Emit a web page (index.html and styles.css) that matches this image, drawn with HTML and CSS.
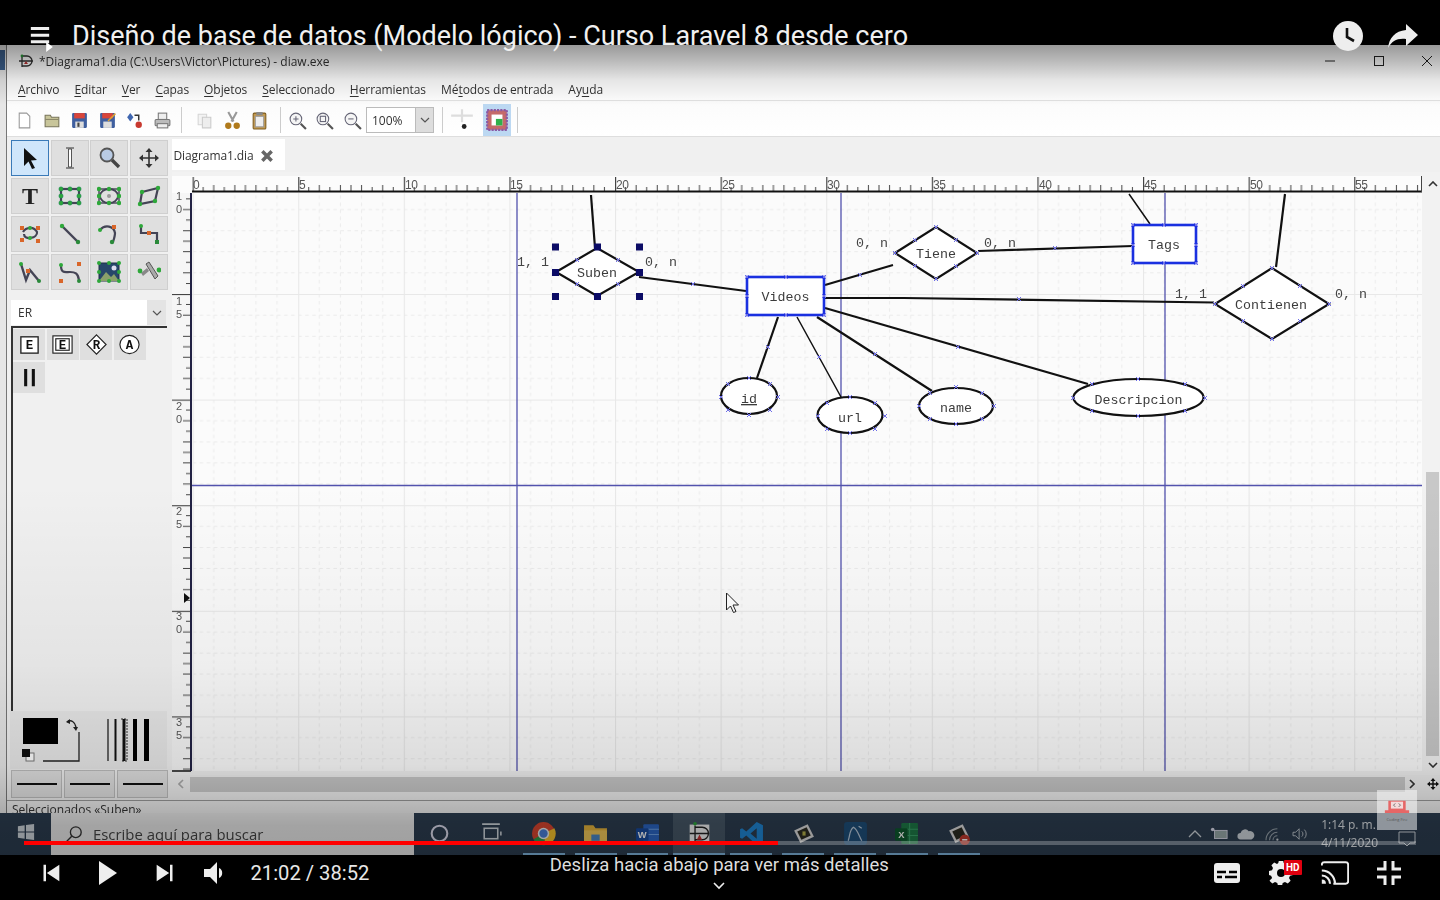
FILE: index.html
```html
<!DOCTYPE html>
<html lang="es">
<head>
<meta charset="utf-8">
<title>Diseño de base de datos</title>
<link rel="stylesheet" href="styles.css">
</head>
<body>
<div class="player">
  <div class="topbar"></div>
  <div class="video">
    <div class="desk">
      <div class="strip"><span class="strip-blue"></span></div>
      <div class="win">
        <div class="titlebar">
          <svg class="ti" viewBox="0 0 16 16"><path d="M1 8h14M4 3h5a5 5 0 0 1 0 10H4zM4 2v12" fill="none" stroke="#333" stroke-width="1.3"/><circle cx="4" cy="3" r="1.4" fill="#2a9a3a"/><path d="M6 11l2-3 2 3z" fill="#b33"/></svg>
          <span class="ti-text">*Diagrama1.dia (C:\Users\Victor\Pictures) - diaw.exe</span>
          <div class="winbtns">
            <svg class="wb" viewBox="0 0 12 12"><path d="M1 6h10" stroke="#222" stroke-width="1"/></svg>
            <svg class="wb" viewBox="0 0 12 12"><rect x="1.5" y="1.5" width="9" height="9" fill="none" stroke="#222" stroke-width="1"/></svg>
            <svg class="wb" viewBox="0 0 12 12"><path d="M1 1l10 10M11 1L1 11" stroke="#222" stroke-width="1"/></svg>
          </div>
        </div>
        <div class="menubar">
          <span><u>A</u>rchivo</span><span><u>E</u>ditar</span><span><u>V</u>er</span><span><u>C</u>apas</span><span><u>O</u>bjetos</span><span><u>S</u>eleccionado</span><span><u>H</u>erramientas</span><span>Mé<u>t</u>odos de entrada</span><span>Ay<u>u</u>da</span>
        </div>
        <div class="toolbar">
          <span class="tb"><svg viewBox="0 0 18 18"><path d="M4 2h7l3 3v11H4z" fill="#fff" stroke="#999"/></svg></span>
          <span class="tb"><svg viewBox="0 0 18 18"><path d="M2 4h5l1 2h7v9H2z" fill="#c8c59a" stroke="#77745a"/><path d="M2 8h13" stroke="#8a8768"/></svg></span>
          <span class="tb"><svg viewBox="0 0 18 18"><rect x="2" y="2" width="14" height="14" rx="1" fill="#3f5f9f"/><rect x="4" y="2" width="10" height="5" fill="#d9453a"/><rect x="5" y="10" width="8" height="6" fill="#ddd"/><rect x="7" y="11" width="2" height="4" fill="#444"/></svg></span>
          <span class="tb"><svg viewBox="0 0 18 18"><rect x="2" y="2" width="14" height="14" rx="1" fill="#3f5f9f"/><rect x="4" y="2" width="10" height="5" fill="#d9453a"/><rect x="5" y="10" width="8" height="6" fill="#ddd"/><path d="M9 9l7-7 1 1-7 7z" fill="#e0a030"/></svg></span>
          <span class="tb"><svg viewBox="0 0 18 18"><path d="M5 2l3 4-3 4-3-4z" fill="#3f66b0"/><path d="M9 4h4v5" fill="none" stroke="#333" stroke-width="1.4"/><circle cx="13" cy="13" r="3" fill="#c8392f"/></svg></span>
          <span class="tb"><svg viewBox="0 0 18 18"><rect x="5" y="2" width="8" height="6" fill="#eee" stroke="#777"/><rect x="2" y="8" width="14" height="6" rx="1" fill="#bbb" stroke="#777"/><rect x="4" y="12" width="10" height="4" fill="#eee" stroke="#777"/></svg></span>
          <i class="sep first"></i>
          <span class="tb tb-a"><svg viewBox="0 0 18 18"><path d="M3 3h8v10H3z" fill="#eee" stroke="#bbb"/><path d="M7 6h8v10H7z" fill="#e4e4e4" stroke="#aaa"/></svg></span>
          <span class="tb"><svg viewBox="0 0 18 18"><path d="M5 1l5 9M13 1L8 10" stroke="#999" stroke-width="2"/><circle cx="5" cy="14" r="3" fill="#b07a1c"/><circle cx="13" cy="14" r="3" fill="#b07a1c"/></svg></span>
          <span class="tb"><svg viewBox="0 0 18 18"><rect x="3" y="2" width="12" height="15" rx="1" fill="#c79a4a" stroke="#7d5c20"/><rect x="5" y="5" width="8" height="10" fill="#eee" stroke="#999"/><rect x="6" y="1" width="6" height="3" fill="#888"/></svg></span>
          <i class="sep second"></i>
          <span class="tb"><svg viewBox="0 0 18 18"><circle cx="7.5" cy="7.5" r="5.5" fill="#f5f5f5" stroke="#667"/><path d="M12 12l5 5" stroke="#555" stroke-width="2"/><path d="M5 7.5h5M7.5 5v5" stroke="#667"/></svg></span>
          <span class="tb"><svg viewBox="0 0 18 18"><circle cx="7.5" cy="7.5" r="5.5" fill="#f5f5f5" stroke="#667"/><path d="M12 12l5 5" stroke="#555" stroke-width="2"/><rect x="5" y="5" width="5" height="5" fill="none" stroke="#667"/></svg></span>
          <span class="tb"><svg viewBox="0 0 18 18"><circle cx="7.5" cy="7.5" r="5.5" fill="#f5f5f5" stroke="#667"/><path d="M12 12l5 5" stroke="#555" stroke-width="2"/><path d="M5 7.5h5" stroke="#667"/></svg></span>
          <span class="combo"><span class="combo-v">100%</span><span class="combo-b"><svg viewBox="0 0 10 6" class="chev"><path d="M1 1l4 4 4-4" fill="none" stroke="#555" stroke-width="1.2"/></svg></span></span>
          <i class="sep third"></i>
          <span class="tb snap"><svg viewBox="0 0 24 24"><path d="M12 2v12M2 8h20" stroke="#ddd" stroke-width="2"/><circle cx="14" cy="18" r="2.2" fill="#222"/></svg></span>
          <span class="tb active"><svg viewBox="0 0 22 22"><rect x="2" y="2" width="18" height="18" fill="#c56a6a" stroke="#8a5aa5" stroke-width="2" stroke-dasharray="2 1"/><rect x="6" y="6" width="10" height="10" fill="#fff"/><rect x="10" y="10" width="6" height="6" fill="#2fb04a"/></svg></span>
          <i class="sep last"></i>
        </div>
        <div class="main">
          <aside class="dock">
            <div class="tools">
              <span class="tool sel"><svg viewBox="0 0 24 24"><path d="M6 2l13 12-6 .5 4 7.5-3 1-3.5-7.5L6 20z" fill="#111"/></svg></span>
              <span class="tool"><svg viewBox="0 0 24 24"><path d="M8 2h8M8 22h8" stroke="#333" stroke-width="1"/><path d="M10.5 3h3v18h-3z" fill="#fff" stroke="#444" stroke-width=".9"/></svg></span>
              <span class="tool"><svg viewBox="0 0 24 24"><circle cx="10" cy="9" r="6.5" fill="#b9cbe4" stroke="#555" stroke-width="1.8"/><path d="M15 14l7 7" stroke="#444" stroke-width="3.4"/></svg></span>
              <span class="tool"><svg viewBox="0 0 24 24"><path d="M12 5v14M5 12h14" stroke="#333" stroke-width="1.6"/><path d="M12 2l3.500 4h-7zM12 22l3.500-4h-7zM2 12l4-3.500v7zM22 12l-4-3.500v7z" fill="#333"/></svg></span>
              <span class="tool"><svg viewBox="0 0 24 24"><text x="12" y="20" class="t-t">T</text></svg></span>
              <span class="tool"><svg viewBox="0 0 24 24"><rect x="3" y="5" width="18" height="14" fill="none" stroke="#445" stroke-width="2.200"/><g fill="#2ea83a" stroke="#176"  stroke-width=".4"><circle cx="3" cy="5" r="2.200"/><circle cx="12" cy="5" r="2.200"/><circle cx="21" cy="5" r="2.200"/><circle cx="3" cy="12" r="2.200"/><circle cx="21" cy="12" r="2.200"/><circle cx="3" cy="19" r="2.200"/><circle cx="12" cy="19" r="2.200"/><circle cx="21" cy="19" r="2.200"/></g></svg></span>
              <span class="tool"><svg viewBox="0 0 24 24"><rect x="2" y="5" width="20" height="14" fill="none" stroke="#445" stroke-width="1.400"/><ellipse cx="12" cy="12" rx="9" ry="7" fill="none" stroke="#445" stroke-width="1.800"/><circle cx="12" cy="12" r="2" fill="#999"/><g fill="#2ea83a"><circle cx="2" cy="5" r="2.200"/><circle cx="12" cy="5" r="2.200"/><circle cx="22" cy="5" r="2.200"/><circle cx="2" cy="12" r="2.200"/><circle cx="22" cy="12" r="2.200"/><circle cx="2" cy="19" r="2.200"/><circle cx="12" cy="19" r="2.200"/><circle cx="22" cy="19" r="2.200"/></g></svg></span>
              <span class="tool"><svg viewBox="0 0 24 24"><path d="M5 8l16-4-3 13-15 3z" fill="none" stroke="#445" stroke-width="2.200"/><g fill="#2ea83a"><circle cx="5" cy="8" r="2.200"/><circle cx="21" cy="4" r="2.200"/><circle cx="18" cy="17" r="2.200"/><circle cx="3" cy="20" r="2.200"/></g></svg></span>
              <span class="tool"><svg viewBox="0 0 24 24"><path d="M5 10c3-5 11-6 14 0 1 6-13 9-13 2" fill="none" stroke="#445" stroke-width="2.200"/><g fill="#d9662a"><rect x="2" y="4" width="4" height="4"/><rect x="18" y="4" width="4" height="4"/><rect x="2" y="16" width="4" height="4"/><rect x="18" y="17" width="4" height="4"/></g><circle cx="12" cy="6" r="2" fill="#2ea83a"/><circle cx="12" cy="16" r="2" fill="#2ea83a"/></svg></span>
              <span class="tool"><svg viewBox="0 0 24 24"><path d="M4 4l16 16" stroke="#445" stroke-width="2.400"/><circle cx="4" cy="4" r="2.200" fill="#2ea83a"/><circle cx="20" cy="20" r="2.200" fill="#2a8a3a"/></svg></span>
              <span class="tool"><svg viewBox="0 0 24 24"><path d="M3 8c5-6 14-4 15 3 0 3-1 6-2 9" fill="none" stroke="#445" stroke-width="2.200"/><circle cx="3" cy="8" r="2" fill="#2ea83a"/><rect x="15" y="3" width="4" height="4" fill="#d9662a"/><circle cx="15" cy="20" r="2.200" fill="#2a8a3a"/></svg></span>
              <span class="tool"><svg viewBox="0 0 24 24"><path d="M4 4v7h16v9" fill="none" stroke="#445" stroke-width="2.200"/><circle cx="4" cy="4" r="2" fill="#2ea83a"/><rect x="10" y="9" width="4" height="4" fill="#d9662a"/><rect x="18" y="18" width="4" height="4" fill="#2a8a3a"/></svg></span>
              <span class="tool"><svg viewBox="0 0 24 24"><path d="M3 4l5 16 4-10 9 11" fill="none" stroke="#445" stroke-width="2.400"/><circle cx="3" cy="4" r="2" fill="#2ea83a"/><rect x="8" y="9" width="4" height="4" fill="#d9662a"/><circle cx="21" cy="21" r="2" fill="#2a8a3a"/></svg></span>
              <span class="tool"><svg viewBox="0 0 24 24"><path d="M3 5c0 9 4 7 9 7s8 1 9 8" fill="none" stroke="#445" stroke-width="2.200"/><circle cx="3" cy="5" r="2" fill="#2ea83a"/><rect x="19" y="2" width="4" height="4" fill="#d9662a"/><rect x="1" y="19" width="4" height="4" fill="#d9662a"/><circle cx="21" cy="21" r="2" fill="#2a8a3a"/></svg></span>
              <span class="tool"><svg viewBox="0 0 24 24"><rect x="2" y="3" width="20" height="18" fill="#27476a" stroke="#234"/><path d="M2 21l7-9 5 5 3-3 5 7z" fill="#8aa06a"/><circle cx="17" cy="8" r="2.5" fill="#dde"/><g fill="#2ea83a"><circle cx="2" cy="3" r="2"/><circle cx="12" cy="3" r="2"/><circle cx="22" cy="3" r="2"/><circle cx="2" cy="12" r="2"/><circle cx="22" cy="12" r="2"/><circle cx="2" cy="21" r="2"/><circle cx="12" cy="21" r="2"/><circle cx="22" cy="21" r="2"/></g></svg></span>
              <span class="tool"><svg viewBox="0 0 24 24"><path d="M9 4l3-2 9 14-3 3z" fill="#aaa" stroke="#555"/><path d="M4 13l6-5 2 3-6 5z" fill="#888"/><circle cx="3" cy="11" r="2.400" fill="#2ea83a"/><circle cx="22" cy="10" r="2.400" fill="#2ea83a"/></svg></span>
            </div>
            <div class="sel-er"><span>ER</span><span class="er-b"><svg viewBox="0 0 10 6" class="chev"><path d="M1 1l4 4 4-4" fill="none" stroke="#555" stroke-width="1.2"/></svg></span></div>
            <div class="sheet">
              <span class="sh"><svg viewBox="0 0 24 24"><rect x="3" y="4" width="18" height="17" fill="#fff" stroke="#222" stroke-width="1.4"/><text x="12" y="17" class="t-er">E</text></svg></span>
              <span class="sh"><svg viewBox="0 0 24 24"><rect x="2" y="3" width="20" height="18" fill="#fff" stroke="#222" stroke-width="1.2"/><rect x="5" y="6" width="14" height="12" fill="#fff" stroke="#222" stroke-width="1.2"/><text x="12" y="16.5" class="t-er">E</text></svg></span>
              <span class="sh"><svg viewBox="0 0 24 24"><path d="M12 2l10 10-10 10L2 12z" fill="#fff" stroke="#222" stroke-width="1.2"/><text x="12" y="17" class="t-er">R</text></svg></span>
              <span class="sh"><svg viewBox="0 0 24 24"><ellipse cx="12" cy="12" rx="10" ry="9.5" fill="#fff" stroke="#222" stroke-width="1.2"/><text x="12" y="17" class="t-er">A</text></svg></span>
              <span class="sh"><svg viewBox="0 0 24 24"><path d="M8 3v18M16 3v18" stroke="#111" stroke-width="3.2"/></svg></span>
            </div>
            <div class="colors">
              <svg class="col-svg" viewBox="10 712 157 58">
                <path d="M79 733v29H43" fill="none" stroke="#222" stroke-width="1.3"/>
                <rect x="23" y="719" width="35" height="26" fill="#000"/>
                <path d="M67 723c4-3 8 0 9 5" fill="none" stroke="#222" stroke-width="1.4"/>
                <path d="M66 723l4-3v5zM76 732l-3-4h5z" fill="#222"/>
                <rect x="26" y="754" width="8" height="8" fill="#fff" stroke="#777"/>
                <rect x="22" y="750" width="8" height="8" fill="#111"/>
                <path d="M108 720v42" stroke="#111" stroke-width="1.2"/><path d="M115.500 720v42" stroke="#111" stroke-width="2"/>
                <path d="M121 720h6v42h-6" fill="none" stroke="#333" stroke-dasharray="2 1"/>
                <path d="M124 720v42" stroke="#111" stroke-width="3"/>
                <path d="M135 720v42" stroke="#000" stroke-width="4"/><path d="M146.500 720v42" stroke="#000" stroke-width="5"/>
              </svg>
            </div>
            <div class="linerow"><span class="ln"><i></i></span><span class="ln"><i></i></span><span class="ln"><i></i></span></div>
          </aside>
          <section class="work">
            <div class="tabs"><span class="tab">Diagrama1.dia<svg class="tabx" viewBox="0 0 12 12"><path d="M2 2l8 8M10 2l-8 8" stroke="#666" stroke-width="3"/></svg></span></div>
            <div class="canvas-row">
              <svg class="canvas" width="1253" height="603" viewBox="172 172 1253 603">
                <defs>
                  <pattern id="grid" x="192.600" y="188.400" width="105.600" height="105.600" patternUnits="userSpaceOnUse">
                    <g stroke="#ebebeb" stroke-width="1" stroke-dasharray="3.520 3.520">
                      <path d="M21.120 0v105.600M42.240 0v105.600M63.360 0v105.600M84.480 0v105.600"/>
                      <path d="M0 21.120h105.600M0 42.240h105.600M0 63.360h105.600M0 84.480h105.600"/>
                    </g>
                    <path d="M.5 0v105.600M0 .5h105.600" stroke="#e8e8e8" stroke-width="1.200"/>
                  </pattern>
                  <pattern id="rx" x="192.600" y="177" width="105.600" height="15" patternUnits="userSpaceOnUse">
                    <path d="M.6 0v14" stroke="#444" stroke-width="1.200"/>
                    <path d="M10.560 10v4M21.120 8v6M31.680 10v4M42.240 8v6M52.800 8v6M63.360 8v6M73.920 10v4M84.480 8v6M95.040 10v4" stroke="#444"/>
                  </pattern>
                  <pattern id="ry" x="172" y="188.400" width="19" height="105.600" patternUnits="userSpaceOnUse">
                    <path d="M0 .5h19" stroke="#444" stroke-width="1.200"/>
                    <path d="M14 10.560h5M11 21.120h8M14 31.680h5M11 42.240h8M11 52.800h8M11 63.360h8M14 73.920h5M11 84.480h8M14 95.040h5" stroke="#444"/>
                  </pattern>
                </defs>
                <rect x="172" y="172" width="1253" height="603" fill="#f2f2f2"/>
                <rect x="172" y="176" width="1250" height="17" fill="#fcfcfc"/>
                <rect x="192" y="177" width="1230" height="15" fill="url(#rx)"/>
                <path d="M192 191.500h1230" stroke="#111" stroke-width="2"/>
                <path d="M1421.500 176v16" stroke="#444"/>
                <g class="rl">
                  <text x="193" y="189">0</text><text x="299" y="189">5</text><text x="405" y="189">10</text><text x="510" y="189">15</text><text x="616" y="189">20</text><text x="722" y="189">25</text><text x="827" y="189">30</text><text x="933" y="189">35</text><text x="1039" y="189">40</text><text x="1144" y="189">45</text><text x="1250" y="189">50</text><text x="1355" y="189">55</text>
                </g>
                <rect x="172" y="193" width="19" height="579" fill="#f6f6f6"/>
                <rect x="172" y="193" width="19" height="578" fill="url(#ry)"/>
                <g class="rl rv">
                  <text x="179" y="200">1</text><text x="179" y="213">0</text>
                  <text x="179" y="305">1</text><text x="179" y="318">5</text>
                  <text x="179" y="410">2</text><text x="179" y="423">0</text>
                  <text x="179" y="515">2</text><text x="179" y="528">5</text>
                  <text x="179" y="620">3</text><text x="179" y="633">0</text>
                  <text x="179" y="726">3</text><text x="179" y="739">5</text>
                </g>
                <path d="M184 593l6 5-6 5z" fill="#111"/>
                <path d="M172 771h19" stroke="#111" stroke-width="1.500"/>
                <rect x="192" y="193" width="1230" height="578" fill="#fbfbfb"/>
                <rect x="192" y="193" width="1230" height="578" fill="url(#grid)"/>
                <path d="M191 193v578" stroke="#222244" stroke-width="2"/>
                <g stroke="#5252ad" stroke-width="1.300" fill="none">
                  <path d="M517 193v578M841 193v578M1165 193v578M192 485.500h1230"/>
                </g>
                <g fill="none" stroke="#111" stroke-width="2.200">
                  <path d="M591 195l4 53M639 277l107 14M825 285l68-20M825 298l79 0 310 4.500M825 308l263 76M817 317l115 74M778 317l-21 61M978 251l155-5"/>
                  <path d="M797 317l44 80M1129 194l21 30" stroke-width="1.500"/>
                  <path d="M1285 194l-9 73"/>
                  <path d="M556 272l41-24 42 24-42 24z" fill="#fff"/>
                  <path d="M895 253l41-26 41 26-41 26z" fill="#fff"/>
                  <path d="M1215 304l57-36 57 36-57 35z" fill="#fff"/>
                  <ellipse cx="749" cy="396" rx="28" ry="18" fill="#fff"/>
                  <ellipse cx="850" cy="415" rx="32.500" ry="18" fill="#fff"/>
                  <ellipse cx="956" cy="406" rx="37" ry="18" fill="#fff"/>
                  <ellipse cx="1138.500" cy="397.500" rx="65" ry="18.500" fill="#fff"/>
                </g>
                <g fill="#fff" stroke="#1a30e0" stroke-width="2.600">
                  <rect x="747" y="277" width="77" height="38"/>
                  <rect x="1133" y="225" width="63" height="38"/>
                </g>
                <g class="dt">
                  <text x="597" y="277">Suben</text>
                  <text x="785.500" y="301">Videos</text>
                  <text x="936" y="258">Tiene</text>
                  <text x="1164" y="249">Tags</text>
                  <text x="1271" y="309">Contienen</text>
                  <text x="749" y="403" text-decoration="underline">id</text>
                  <text x="850" y="422">url</text>
                  <text x="956" y="412">name</text>
                  <text x="1138.500" y="404">Descripcion</text>
                </g>
                <g class="dl">
                  <text x="517" y="266">1, 1</text>
                  <text x="645" y="266">0, n</text>
                  <text x="856" y="247">0, n</text>
                  <text x="984" y="247">0, n</text>
                  <text x="1175" y="298">1, 1</text>
                  <text x="1335" y="298">0, n</text>
                </g>
                <path fill="none" stroke="#6f6fe8" stroke-width="1" d="M575 258l4 4m0-4l-4 4M616 258l4 4m0-4l-4 4M575 282l4 4m0-4l-4 4M616 282l4 4m0-4l-4 4M691 282l4 4m0-4l-4 4M745 275l4 4m0-4l-4 4M784 275l4 4m0-4l-4 4M822 275l4 4m0-4l-4 4M745 294l4 4m0-4l-4 4M822 294l4 4m0-4l-4 4M745 313l4 4m0-4l-4 4M784 313l4 4m0-4l-4 4M822 313l4 4m0-4l-4 4M858 273l4 4m0-4l-4 4M747 376l4 4m0-4l-4 4M726 382l4 4m0-4l-4 4M768 382l4 4m0-4l-4 4M719 395l4 4m0-4l-4 4M776 395l4 4m0-4l-4 4M726 408l4 4m0-4l-4 4M768 408l4 4m0-4l-4 4M747 413l4 4m0-4l-4 4M766 345l4 4m0-4l-4 4M848 395l4 4m0-4l-4 4M825 401l4 4m0-4l-4 4M873 401l4 4m0-4l-4 4M816 414l4 4m0-4l-4 4M883 414l4 4m0-4l-4 4M825 427l4 4m0-4l-4 4M873 427l4 4m0-4l-4 4M848 431l4 4m0-4l-4 4M817 355l4 4m0-4l-4 4M954 385l4 4m0-4l-4 4M928 391l4 4m0-4l-4 4M980 391l4 4m0-4l-4 4M917 404l4 4m0-4l-4 4M992 404l4 4m0-4l-4 4M928 417l4 4m0-4l-4 4M980 417l4 4m0-4l-4 4M954 422l4 4m0-4l-4 4M873 352l4 4m0-4l-4 4M1136 377l4 4m0-4l-4 4M1090 382l4 4m0-4l-4 4M1183 382l4 4m0-4l-4 4M1071 396l4 4m0-4l-4 4M1203 396l4 4m0-4l-4 4M1090 409l4 4m0-4l-4 4M1183 409l4 4m0-4l-4 4M1136 414l4 4m0-4l-4 4M956 345l4 4m0-4l-4 4M913 238l4 4m0-4l-4 4M954 238l4 4m0-4l-4 4M913 264l4 4m0-4l-4 4M954 264l4 4m0-4l-4 4M934 225l4 4m0-4l-4 4M934 277l4 4m0-4l-4 4M893 251l4 4m0-4l-4 4M975 251l4 4m0-4l-4 4M1053 246l4 4m0-4l-4 4M1131 223l4 4m0-4l-4 4M1162 223l4 4m0-4l-4 4M1194 223l4 4m0-4l-4 4M1131 243l4 4m0-4l-4 4M1194 243l4 4m0-4l-4 4M1131 261l4 4m0-4l-4 4M1162 261l4 4m0-4l-4 4M1194 261l4 4m0-4l-4 4M1241 284l4 4m0-4l-4 4M1298 284l4 4m0-4l-4 4M1241 319l4 4m0-4l-4 4M1298 319l4 4m0-4l-4 4M1270 266l4 4m0-4l-4 4M1270 337l4 4m0-4l-4 4M1213 302l4 4m0-4l-4 4M1327 302l4 4m0-4l-4 4M1017 297l4 4m0-4l-4 4"/>
                <g fill="#0c0c66">
                  <rect x="552" y="243.500" width="7" height="7"/><rect x="594" y="243.500" width="7" height="7"/><rect x="636" y="243.500" width="7" height="7"/>
                  <rect x="552" y="269" width="7" height="7"/><rect x="636" y="269" width="7" height="7"/>
                  <rect x="552" y="293" width="7" height="7"/><rect x="594" y="293" width="7" height="7"/><rect x="636" y="293" width="7" height="7"/>
                </g>
                <path d="M726.500 593v17l4-4 3 6.500 2.500-1-3-6.500h5.500z" fill="#fff" stroke="#222" stroke-width="1"/>
              </svg>
              <div class="vscroll">
                <svg class="sc-ar" viewBox="0 0 10 6"><path d="M1 5l4-4 4 4" fill="none" stroke="#333" stroke-width="1.600"/></svg>
                <span class="vthumb"></span>
                <svg class="sc-ar" viewBox="0 0 10 6"><path d="M1 1l4 4 4-4" fill="none" stroke="#333" stroke-width="1.600"/></svg>
              </div>
            </div>
            <div class="hscroll">
              <svg class="sc-h" viewBox="0 0 6 10"><path d="M5 1L1 5l4 4" fill="none" stroke="#aaa" stroke-width="1.600"/></svg>
              <span class="hthumb"></span>
              <svg class="sc-h" viewBox="0 0 6 10"><path d="M1 1l4 4-4 4" fill="none" stroke="#333" stroke-width="1.600"/></svg>
              <svg class="move" viewBox="0 0 24 24"><path d="M12 2v20M2 12h20" stroke="#111" stroke-width="2.800"/><path d="M12 0l5 6H7zM12 24l5-6H7zM0 12l6-5v10zM24 12l-6-5v10z" fill="#111"/></svg>
            </div>
          </section>
        </div>
        <div class="status">Seleccionados «Suben»</div>
      </div>
    </div>
    <div class="taskbar">
      <span class="start"><svg viewBox="0 0 20 20"><path d="M1 3.500l7.500-1v7H1zM10 2.300L19 1v8.500h-9zM1 10.500h7.500v7l-7.500-1zM10 10.500h9V19l-9-1.300z" fill="#cfd6dc"/></svg></span>
      <div class="search">
        <svg class="s-ic" viewBox="0 0 20 20"><circle cx="12" cy="8" r="6" fill="none" stroke="#333" stroke-width="1.500"/><path d="M7.500 12.500L2 18" stroke="#333" stroke-width="1.500"/></svg>
        <span>Escribe aquí para buscar</span>
      </div>
      <div class="apps">
        <span class="app"><svg viewBox="0 0 24 24"><circle cx="12" cy="12" r="7.500" fill="none" stroke="#dde" stroke-width="2"/></svg></span>
        <span class="app"><svg viewBox="0 0 24 24"><rect x="5" y="7" width="13" height="10" fill="none" stroke="#cfd6dc" stroke-width="1.500"/><path d="M3 3h17M3 21h17M21 10v4" stroke="#cfd6dc" stroke-width="1.500"/></svg></span>
        <span class="app on"><svg viewBox="0 0 24 24"><circle cx="12" cy="12" r="11" fill="#d9452f"/><path d="M12 12L2.500 17.500A11 11 0 0 0 14 23z" fill="#2e9b48"/><path d="M12 12L14 23A11 11 0 0 0 22.500 7z" fill="#f4c22c"/><circle cx="12" cy="12" r="5.500" fill="#eee"/><circle cx="12" cy="12" r="4" fill="#4a7ed8"/></svg></span>
        <span class="app on"><svg viewBox="0 0 24 24"><path d="M1 4h9l2 3h11v15H1z" fill="#e7b53c"/><rect x="1" y="9" width="22" height="13" fill="#f2c95a"/><rect x="8" y="13" width="8" height="6" fill="#4a86c5"/></svg></span>
        <span class="app on"><svg viewBox="0 0 24 24"><rect x="8" y="3" width="15" height="18" rx="1" fill="#2b66c4"/><path d="M8 8h15M8 13h15" stroke="#6ea2e6" stroke-width="1"/><rect x="1" y="7" width="12" height="12" rx="1" fill="#174a9e"/><text x="7" y="16.500" class="t-app">W</text></svg></span>
        <span class="app cur"><svg viewBox="0 0 28 28"><rect x="3" y="4" width="22" height="22" fill="#f3f3f3"/><path d="M3 14h22M9 7h8a7 7 0 0 1 0 14H9zM9 5v18" fill="none" stroke="#222" stroke-width="1.500"/><circle cx="9" cy="3" r="2" fill="#2ea83a"/><path d="M11 21l3-6 3 6z" fill="#c93030"/></svg></span>
        <span class="app on"><svg viewBox="0 0 24 24"><path d="M17 1l6 3v16l-6 3L7 14l-4 3-2-1v-8l2-1 4 3zM17 7l-6 5 6 5z" fill="#1f86d4"/></svg></span>
        <span class="app on"><svg viewBox="0 0 24 24"><path d="M3 9l13-6 6 12-13 6z" fill="#ddd"/><path d="M6 10l9-4 4 8-9 4z" fill="#2c2c22"/><path d="M11 10l3 0 0 4-3 0z" fill="#b6b14a"/></svg></span>
        <span class="app on"><svg viewBox="0 0 24 24"><rect x="1" y="1" width="22" height="22" rx="3" fill="#1e4f7a"/><path d="M5 19c2-6 1-10 5-13 4 2 5 8 8 13M15 5l3 2" fill="none" stroke="#bcd" stroke-width="1.200"/></svg></span>
        <span class="app on"><svg viewBox="0 0 24 24"><rect x="7" y="2" width="16" height="20" rx="1" fill="#1e7a47"/><path d="M7 8h16M7 14h16M15 2v20" stroke="#3aa36a" stroke-width="1"/><rect x="1" y="7" width="12" height="12" rx="1" fill="#0d5a2e"/><text x="7" y="16.500" class="t-app">X</text></svg></span>
        <span class="app on"><svg viewBox="0 0 24 24"><path d="M3 9l13-6 6 12-13 6z" fill="#ddd"/><path d="M6 10l9-4 4 8-9 4z" fill="#2c2c22"/><circle cx="18" cy="18" r="5" fill="#c23b2e"/><path d="M15.500 18h5" stroke="#fff" stroke-width="1.500"/></svg></span>
      </div>
      <div class="tray">
        <svg class="tr chev-t" viewBox="0 0 14 8"><path d="M1 7l6-6 6 6" fill="none" stroke="#cfd6dc" stroke-width="1.300"/></svg>
        <svg class="tr" viewBox="0 0 20 14"><rect x="5" y="3" width="14" height="9" fill="#9aa" stroke="#dde"/><circle cx="3" cy="2" r="2" fill="#dde"/></svg>
        <svg class="tr" viewBox="0 0 20 14"><path d="M4 13a3.500 3.500 0 0 1 0-7 5 5 0 0 1 9-2 4.500 4.500 0 0 1 3 9z" fill="#cfd6dc"/></svg>
        <svg class="tr" viewBox="0 0 20 16"><path d="M2 15a13 13 0 0 1 13-13M6 15a9 9 0 0 1 9-9M10 15a5 5 0 0 1 5-5" fill="none" stroke="#99a4ad" stroke-width="1.200"/><circle cx="15" cy="14.500" r="1.300" fill="#cfd6dc"/></svg>
        <svg class="tr vol-t" viewBox="0 0 20 16"><path d="M2 6h3l4-4v12l-4-4H2z" fill="none" stroke="#cfd6dc"/><path d="M12 5a4 4 0 0 1 0 6M15 3a7 7 0 0 1 0 10" fill="none" stroke="#cfd6dc"/></svg>
        <div class="clock-t"><span>1:14 p. m.</span><span>4/11/2020</span></div>
        <svg class="notif" viewBox="0 0 18 16"><path d="M1 1h16v11h-5l-3 3-3-3H1z" fill="none" stroke="#cfd6dc"/></svg>
      </div>
    </div>
    <div class="shade"></div>
    <div class="progress"><span class="played"></span></div>
    <div class="mark">
      <svg viewBox="0 0 30 20"><path d="M5 4h20v11h4v3H1v-3h4z" fill="#e85a5a"/><rect x="8" y="5" width="14" height="8" fill="#f6dada"/><path d="M13 7l-2 2 2 2M17 7l2 2-2 2" fill="none" stroke="#555" stroke-width="1"/></svg>
      <span>Coding Fire</span>
    </div>
  </div>
  <div class="controls">
    <div class="c-left">
      <span class="ctl"><svg viewBox="0 0 24 24"><path d="M3 2h3v20H3zM22 2v20L7 12z" fill="#eee"/></svg></span>
      <span class="ctl"><svg class="play" viewBox="0 0 24 24"><path d="M3 0v24l18-12z" fill="#eee"/></svg></span>
      <span class="ctl"><svg viewBox="0 0 24 24"><path d="M18 2h3v20h-3zM2 2v20l15-10z" fill="#eee"/></svg></span>
      <span class="ctl vol"><svg viewBox="0 0 24 24"><path d="M1 8h6l7-7v22l-7-7H1z" fill="#eee"/><path d="M16 7a5.500 5.500 0 0 1 0 10z" fill="#eee"/></svg></span>
      <span class="time">21:02 / 38:52</span>
    </div>
    <div class="c-mid">
      <span>Desliza hacia abajo para ver más detalles</span>
      <svg viewBox="0 0 12 8" class="c-chev"><path d="M1 1l5 5 5-5" fill="none" stroke="#eee" stroke-width="1.600"/></svg>
    </div>
    <div class="c-right">
      <span class="ctr"><svg viewBox="0 0 28 24"><rect x="1" y="2" width="26" height="20" rx="3" fill="#eee"/><path d="M4 11h9M16 11h8M4 16h5M12 16h12" stroke="#000" stroke-width="2.400"/></svg></span>
      <span class="ctr gear"><svg viewBox="0 0 24 24"><path d="M10 1h4l.7 3 2.300 1 2.700-1.600 2.800 2.800L20.900 9l1 2.300 2.100.7v4l-3 .7-1 2.300 1.600 2.700-2.800 2.800-2.800-1.600-2.300 1-.7 3h-4l-.7-3-2.300-1-2.700 1.600-2.800-2.800L3.100 19l-1-2.300L0 16v-4l3-.7 1-2.300-1.600-2.800 2.800-2.800L8 5l1.300-1z" fill="#eee" transform="translate(0 -2)"/><circle cx="12" cy="12" r="4" fill="#000"/></svg><b class="hd">HD</b></span>
      <span class="ctr"><svg viewBox="0 0 34 28"><path d="M1 5V4a3 3 0 0 1 3-3h26a3 3 0 0 1 3 3v20a3 3 0 0 1-3 3H15" fill="none" stroke="#eee" stroke-width="2.400"/><path d="M1 11a16 16 0 0 1 16 16M1 17a10 10 0 0 1 10 10" fill="none" stroke="#eee" stroke-width="2.600"/><path d="M1 22a5 5 0 0 1 5 5H1z" fill="#eee"/></svg></span>
      <span class="ctr"><svg viewBox="0 0 24 24"><path d="M8 0v8H0M16 0v8h8M8 24v-8H0M16 24v-8h8" fill="none" stroke="#eee" stroke-width="3"/></svg></span>
    </div>
  </div>
  <div class="head">
    <svg class="menu-ic" viewBox="0 0 24 24"><path d="M1 3h22M1 11h22M1 19h22" stroke="#eee" stroke-width="3.600"/></svg>
    <h1>Diseño de base de datos (Modelo lógico) - Curso Laravel 8 desde cero</h1>
    <svg class="clock" viewBox="0 0 32 32"><circle cx="16" cy="16" r="15" fill="#eee"/><path d="M15 8v9l7 4" fill="none" stroke="#111" stroke-width="2.600"/></svg>
    <svg class="share" viewBox="0 0 32 26"><path d="M19 1l12 11-12 11v-7C10 15 5 18 1 25c1-10 7-17 18-18z" fill="#eee"/></svg>
  </div>
  <svg class="menu-tri" viewBox="0 0 10 12"><path d="M1 0l8 6-8 6z" fill="#fff"/></svg>
</div>
</body>
</html>
```
FILE: styles.css
```css
* { box-sizing: border-box; }
html, body { margin: 0; height: 100%; background: #000; overflow: hidden; }
.player { position: relative; width: 1440px; height: 900px; display: flex; flex-direction: column; background: #000; font-family: "Open Sans", "Noto Sans", sans-serif; }
.topbar { height: 45px; background: #000; flex: none; }
.video { position: relative; height: 810px; flex: none; display: flex; flex-direction: column; overflow: hidden; }
.desk { height: 768px; display: flex; flex: none; background: #f0f0f0; filter: blur(.4px); }
.strip { width: 7px; flex: none; background: #e6e6e6; border-right: 1px solid #777; }
.strip-blue { display: block; height: 20px; width: 5px; margin-top: 5px; background: #3b5f8c; }
.win { flex: 1; min-width: 0; display: flex; flex-direction: column; background: #f0f0f0; }

.titlebar { height: 31px; display: flex; align-items: center; background: #fff; padding: 1px 0 0 11px; font-size: 12px; color: #333; }
.ti { width: 16px; height: 16px; margin-right: 5px; }
.winbtns { margin-left: auto; display: flex; gap: 36.500px; padding-right: 7px; }
.wb { width: 12px; height: 12px; }

.menubar { height: 25px; display: flex; align-items: center; gap: 15px; padding: 3px 0 0 11px; font-size: 12px; color: #333; background: #fff; border-bottom: 1px solid #e2e2e2; letter-spacing: -.07px; }
.menubar u { text-underline-offset: 2px; }

.toolbar { height: 36px; display: flex; align-items: center; padding: 3px 0 0 4px; background: linear-gradient(#fbfbfb, #ffffff); border-bottom: 1px solid #dedede; }
.tb { width: 27.500px; height: 30px; display: flex; align-items: center; justify-content: center; flex: none; }
.tb svg { width: 19px; height: 19px; }
.tb-a svg { opacity: .6; }
.sep { width: 1px; height: 26px; background: #ccc; flex: none; }
.sep.first { margin: 0 9px 0 5px; }
.sep.second { margin: 0 3px 0 6px; }
.sep.third { margin: 0 5px 0 8px; }
.sep.last { margin-left: 6px; }
.combo { width: 68px; height: 26px; display: flex; border: 1px solid #bbb; background: #fff; font-size: 12px; color: #333; }
.combo-v { flex: 1; padding: 4px 0 0 5px; }
.combo-b { width: 18px; background: #ddd; border-left: 1px solid #bbb; display: flex; align-items: center; justify-content: center; }
.chev { width: 10px; height: 6px; }
.snap svg { width: 26px; height: 26px; }
.snap { margin-right: 7px; }
.active { width: 28px; height: 32px; background: #bcd8f2; }
.active svg { width: 24px; height: 24px; }

.main { height: 663px; display: flex; flex: none; }
.dock { width: 165px; flex: none; padding: 3px 0 2px 4px; display: flex; flex-direction: column; background: #f0f0f0; }
.tools { display: grid; grid-template-columns: repeat(4, 38px); grid-auto-rows: 36px; column-gap: 1.500px; row-gap: 2px; }
.tool { display: flex; align-items: center; justify-content: center; background: #dfdfdf; border: 1px solid #cfcfcf; }
.tool svg { width: 24px; height: 24px; }
.tool.sel { background: #cfe6fb; border: 1px solid #3a7ab8; }
.t-t { font: bold 24px "Liberation Serif", serif; text-anchor: middle; fill: #222; }
.t-er { font: bold 13px "Liberation Mono", monospace; text-anchor: middle; fill: #111; }
.sel-er { margin-top: 10px; height: 25px; width: 155px; display: flex; background: #fff; font-size: 12px; color: #333; align-items: center; padding-left: 7px; flex: none; }
.er-b { margin-left: auto; width: 19px; height: 25px; background: #e4e4e4; display: flex; align-items: center; justify-content: center; }
.sheet { flex: 1; margin-top: 1px; width: 156px; border-top: 2px solid #333; border-left: 2px solid #333; padding: 1px 0 0 0; display: flex; flex-wrap: wrap; align-content: flex-start; column-gap: 1.500px; row-gap: 2px; }
.sh { width: 32px; height: 31px; background: #dfdfdf; display: flex; align-items: center; justify-content: center; }
.sh svg { width: 23px; height: 23px; }
.colors { height: 58px; flex: none; width: 157px; margin-left: -1px; background: #e8e8e8; }
.col-svg { display: block; width: 157px; height: 58px; }
.linerow { height: 28px; margin-top: 1px; width: 157px; display: flex; gap: 2px; flex: none; }
.ln { flex: 1; border: 1px solid #bdbdbd; display: flex; align-items: center; justify-content: center; background: #e0e0e0; }
.ln i { width: 40px; height: 2px; background: #111; }

.work { flex: 1; min-width: 0; display: flex; flex-direction: column; background: #f0f0f0; }
.tabs { height: 35px; flex: none; display: flex; padding-top: 2px; }
.tab { width: 113px; height: 31px; background: #fff; display: flex; align-items: center; padding: 2px 0 0 1.500px; font-size: 12px; color: #333; letter-spacing: -.1px; }
.tabx { width: 14px; height: 14px; margin-left: 6px; }
.canvas-row { display: flex; height: 603px; flex: none; }
.canvas { display: block; flex: none; }
.rl text { font: 12px "Liberation Sans", sans-serif; fill: #555; letter-spacing: -.3px; }
.rv text { font-size: 11px; text-anchor: middle; letter-spacing: 0; }
.dt text { font: 13.300px "Liberation Mono", monospace; fill: #3c3c3c; text-anchor: middle; }
.dl text { font: 13.300px "Liberation Mono", monospace; fill: #444; }
.vscroll { width: 15px; flex: none; display: flex; flex-direction: column; align-items: center; padding-top: 9px; background: #f2f2f2; }
.vthumb { width: 13px; height: 284px; margin-top: 285px; background: #c8c8c8; }
.sc-ar { width: 10px; height: 6px; flex: none; }
.sc-ar:last-child { margin-top: 6px; }
.hscroll { height: 20px; flex: none; display: flex; align-items: center; padding: 0 0 2px 6px; }
.sc-h { width: 6px; height: 10px; flex: none; }
.hthumb { width: 1215px; height: 15px; margin: 0 4px 0 6px; background: #c8c8c8; }
.move { width: 12px; height: 12px; margin-left: 12px; }

.status { height: 13px; flex: none; overflow: hidden; font-size: 12px; line-height: 17px; padding-left: 5px; color: #333; border-top: 1px solid #999; background: #eee; white-space: nowrap; }

.taskbar { height: 42px; flex: none; display: flex; background: #2c3d50; filter: blur(.4px); }
.start { width: 51px; flex: none; display: flex; align-items: center; justify-content: center; padding-bottom: 4px; }
.start svg { width: 18px; height: 18px; }
.search { width: 363px; flex: none; background: #eaeaea; display: flex; align-items: center; font-size: 14.900px; color: #444; padding: 0 0 0 14px; }
.s-ic { width: 18px; height: 18px; margin-right: 10px; margin-bottom: 1px; }
.apps { display: flex; }
.app { width: 51.900px; height: 42px; display: flex; align-items: center; justify-content: center; padding-bottom: 2px; position: relative; }
.app svg { width: 25px; height: 25px; }
.app.on::after, .app.cur::after { content: ""; position: absolute; left: 5px; right: 5px; bottom: 0; height: 2px; background: #7fb4dc; }
.app.cur { background: #465767; }
.app.cur::after { left: 0; right: 0; }
.t-app { font: bold 9px "Liberation Sans", sans-serif; fill: #fff; text-anchor: middle; }
.tray { margin-left: auto; display: flex; align-items: center; padding-right: 24px; }
.tr { width: 18px; height: 14px; margin-right: 9px; }
.chev-t { width: 14px; height: 8px; margin-right: 8px; }
.vol-t { margin-right: 6px; }
.clock-t { display: flex; flex-direction: column; gap: 2px; font-size: 12px; line-height: 16px; color: #dfe4e8; margin: -1px 20px 0 6px; }
.notif { width: 18px; height: 16px; margin-top: 10px; }

.shade { position: absolute; inset: 0; pointer-events: none; background: linear-gradient(rgba(0,0,0,.4) 0, rgba(0,0,0,.28) 15px, rgba(0,0,0,.1) 35px, rgba(0,0,0,0) 60px, rgba(0,0,0,0) 440px, rgba(0,0,0,.05) 620px, rgba(0,0,0,.12) 720px, rgba(0,0,0,.2) 750px, rgba(0,0,0,.3) 780px, rgba(0,0,0,.32) 810px); }
.progress { position: absolute; left: 24px; width: 1392px; top: 796px; height: 4px; background: rgba(255,255,255,.25); }
.played { display: block; width: 754px; height: 4px; background: #f00; }
.mark { position: absolute; left: 1377px; top: 745px; width: 40px; height: 40px; background: rgba(255,255,255,.5); display: flex; flex-direction: column; align-items: center; padding-top: 7px; font-size: 4px; color: #555; }
.mark svg { width: 26px; height: 18px; margin-bottom: 2px; opacity: .9; }

.controls { height: 45px; flex: none; display: flex; background: #000; color: #eee; font-family: Roboto, sans-serif; }
.c-left, .c-right { flex: 1; display: flex; align-items: center; padding-bottom: 10px; }
.c-right { justify-content: flex-end; padding-right: 24px; }
.c-left { padding-left: 22.500px; }
.ctl { width: 57px; display: flex; justify-content: center; flex: none; }
.ctl svg { width: 20px; height: 20px; }
.ctl .play { width: 24px; height: 24px; }
.vol { width: 28px; margin-left: 7px; }
.vol svg { width: 24px; height: 24px; }
.time { margin-left: 22px; font-size: 20.200px; color: #e8e8e8; }
.c-mid { display: flex; flex-direction: column; align-items: center; font-size: 18.500px; color: #ddd; line-height: 20px; }
.c-chev { width: 12px; height: 8px; margin-top: 7px; }
.ctr { width: 54px; display: flex; justify-content: center; position: relative; flex: none; }
.ctr svg { width: 28px; height: 24px; }
.gear svg { width: 24px; height: 24px; }
.hd { position: absolute; left: 30px; top: -1px; background: #e0000f; color: #fff; font: bold 10px Roboto, sans-serif; padding: 2px 2px; border-radius: 1px; }

.head { position: absolute; left: 0; right: 0; top: 16px; height: 40px; display: flex; align-items: center; padding: 0 21px 0 30px; color: #f0f0f0; }
.menu-ic { width: 20px; height: 20px; flex: none; }
.head h1 { margin: 0 0 0 22px; font: 400 27px/40px Roboto, sans-serif; white-space: nowrap; }
.clock { width: 32px; height: 32px; margin-left: auto; }
.share { width: 32px; height: 26px; margin-left: 23px; }
.menu-tri { position: absolute; left: 45px; top: 42px; width: 9px; height: 10px; }
```
